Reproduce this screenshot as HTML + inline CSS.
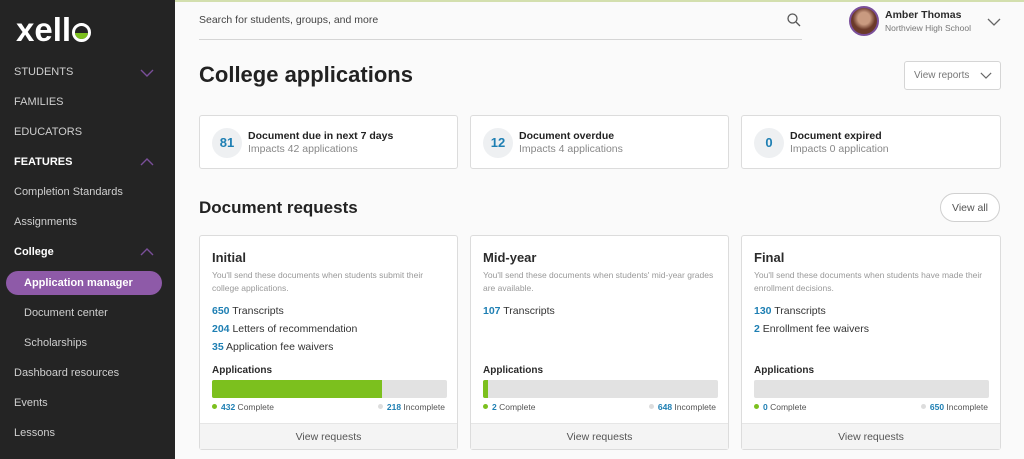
<!DOCTYPE html>
<html><head><style>
*{margin:0;padding:0;box-sizing:border-box}
body{width:1024px;height:459px;overflow:hidden;font-family:"Liberation Sans",sans-serif;background:#fafafa;position:relative;color:#2b2b2b}
.a{position:absolute}
#sb{left:0;top:0;width:175px;height:459px;background:#242424}
.nav{position:absolute;left:14px;font-size:11px;color:#cfcfcf}
.chev{position:absolute;left:140px;width:14px;height:8px}
.card{position:absolute;background:#fff;border:1px solid #dcdcdc;border-radius:3px}
.num{position:absolute;left:12px;top:12px;width:30px;height:30px;border-radius:50%;background:#eef0f2;color:#1e7fb3;font-weight:bold;font-size:13px;text-align:center;line-height:30px}
.st{position:absolute;left:48px;top:14px;font-size:10.5px;font-weight:bold;color:#222}
.ss{position:absolute;left:48px;top:27px;font-size:10.5px;color:#888}
.dt{position:absolute;left:12px;top:14px;font-size:13px;font-weight:bold}
.dd{position:absolute;left:12px;top:33px;width:240px;font-size:8.5px;line-height:13px;color:#999}
.li{position:absolute;left:12px;font-size:10.5px;color:#333}
.li b{color:#1e7fb3}
.ap{position:absolute;left:12px;top:129px;font-size:10px;font-weight:bold}
.bar{position:absolute;left:12px;top:144px;width:235px;height:18px;background:#e2e2e2;border-radius:2px;overflow:hidden}
.bar i{display:block;height:100%;background:#7cc01e}
.lg{position:absolute;top:166px;font-size:8.5px;color:#555}
.lg b{color:#1e7fb3}
.dot{display:inline-block;width:5px;height:5px;border-radius:50%;margin-right:4px;vertical-align:1px}
.ft{position:absolute;left:0;bottom:0;width:100%;height:26px;background:#f4f4f4;border-top:1px solid #e6e6e6;text-align:center;font-size:10.5px;line-height:26px;color:#555}
</style></head><body>
<div id="sb">
<div class="a" style="left:16px;top:11px;font-size:33px;font-weight:bold;color:#fff;letter-spacing:0px">xell<span style="display:inline-block;width:19px;height:19px;border:3.5px solid #fff;border-radius:50%;vertical-align:-1px;position:relative;overflow:hidden;margin-left:1px"><span style="position:absolute;left:0;right:0;bottom:0;height:6px;background:#7cc01e"></span></span></div>
<div class="nav" style="top:66px">STUDENTS</div>
<svg class="chev" style="top:69px" viewBox="0 0 14 8"><path d="M1 1l6 6 6-6" fill="none" stroke="#7a4f9a" stroke-width="1.4"/></svg>
<div class="nav" style="top:96px">FAMILIES</div>
<div class="nav" style="top:126px">EDUCATORS</div>
<div class="nav" style="top:156px;font-weight:bold;color:#fff">FEATURES</div>
<svg class="chev" style="top:158px" viewBox="0 0 14 8"><path d="M1 7l6-6 6 6" fill="none" stroke="#7a4f9a" stroke-width="1.4"/></svg>
<div class="nav" style="top:186px">Completion Standards</div>
<div class="nav" style="top:216px">Assignments</div>
<div class="nav" style="top:246px;font-weight:bold;color:#fff">College</div>
<svg class="chev" style="top:248px" viewBox="0 0 14 8"><path d="M1 7l6-6 6 6" fill="none" stroke="#7a4f9a" stroke-width="1.4"/></svg>
<div class="a" style="left:6px;top:271px;width:156px;height:24px;border-radius:12px;background:#8e5aa8"></div>
<div class="nav" style="left:24px;top:277px;font-weight:bold;color:#fff">Application manager</div>
<div class="nav" style="left:24px;top:307px">Document center</div>
<div class="nav" style="left:24px;top:337px">Scholarships</div>
<div class="nav" style="top:367px">Dashboard resources</div>
<div class="nav" style="top:397px">Events</div>
<div class="nav" style="top:427px">Lessons</div>
</div>
<div class="a" style="left:175px;top:0;width:849px;height:2px;background:#d3dfae"></div>
<div class="a" style="left:199px;top:14px;font-size:10.5px;color:#444">Search for students, groups, and more</div>
<svg class="a" style="left:787px;top:13px" width="14" height="14" viewBox="0 0 14 14"><circle cx="5.5" cy="5.5" r="4.5" fill="none" stroke="#555" stroke-width="1.3"/><path d="M9 9l4 4" stroke="#555" stroke-width="1.3"/></svg>
<div class="a" style="left:199px;top:39px;width:603px;height:1px;background:#d5d5d5"></div>
<div class="a" style="left:849px;top:6px;width:30px;height:30px;border-radius:50%;background:radial-gradient(circle at 50% 40%,#c99a80 0 30%,#6b3a2a 55%);border:2px solid #7a4f9a"></div>
<div class="a" style="left:885px;top:9px;font-size:10.5px;font-weight:bold">Amber Thomas</div>
<div class="a" style="left:885px;top:23px;font-size:8.5px;color:#777">Northview High School</div>
<svg class="a" style="left:987px;top:18px" width="14" height="8" viewBox="0 0 14 8"><path d="M1 1l6 6 6-6" fill="none" stroke="#666" stroke-width="1.3"/></svg>
<div class="a" style="left:199px;top:62px;font-size:22px;font-weight:bold;color:#222">College applications</div>
<div class="a" style="left:904px;top:61px;width:97px;height:29px;background:#fff;border:1px solid #d5d5d5;border-radius:3px;font-size:10px;color:#777;line-height:27px;padding-left:9px">View reports<svg style="position:absolute;left:75px;top:10px" width="12" height="7" viewBox="0 0 14 8"><path d="M1 1l6 6 6-6" fill="none" stroke="#666" stroke-width="1.3"/></svg></div>

<div class="card" style="left:199px;top:115px;width:259px;height:54px"><div class="num">81</div><div class="st">Document due in next 7 days</div><div class="ss">Impacts 42 applications</div></div>
<div class="card" style="left:470px;top:115px;width:259px;height:54px"><div class="num">12</div><div class="st">Document overdue</div><div class="ss">Impacts 4 applications</div></div>
<div class="card" style="left:741px;top:115px;width:260px;height:54px"><div class="num">0</div><div class="st">Document expired</div><div class="ss">Impacts 0 application</div></div>

<div class="a" style="left:199px;top:198px;font-size:17px;font-weight:bold;color:#222">Document requests</div>
<div class="a" style="left:940px;top:193px;width:60px;height:29px;border-radius:15px;background:#fff;border:1px solid #d0d0d0;font-size:10.5px;text-align:center;line-height:29px;color:#555">View all</div>

<div class="card" style="left:199px;top:235px;width:259px;height:215px">
<div class="dt">Initial</div><div class="dd">You'll send these documents when students submit their college applications.</div>
<div class="li" style="top:69px"><b>650</b> Transcripts</div>
<div class="li" style="top:87px"><b>204</b> Letters of recommendation</div>
<div class="li" style="top:105px"><b>35</b> Application fee waivers</div>
<div class="ap">Applications</div><div class="bar"><i style="width:72.5%"></i></div>
<div class="lg" style="left:12px"><span class="dot" style="background:#7cc01e"></span><b>432</b> Complete</div>
<div class="lg" style="right:12px"><span class="dot" style="background:#ddd"></span><b>218</b> Incomplete</div>
<div class="ft">View requests</div></div>

<div class="card" style="left:470px;top:235px;width:259px;height:215px">
<div class="dt">Mid-year</div><div class="dd">You'll send these documents when students' mid-year grades are available.</div>
<div class="li" style="top:69px"><b>107</b> Transcripts</div>
<div class="ap">Applications</div><div class="bar"><i style="width:2%"></i></div>
<div class="lg" style="left:12px"><span class="dot" style="background:#7cc01e"></span><b>2</b> Complete</div>
<div class="lg" style="right:12px"><span class="dot" style="background:#ddd"></span><b>648</b> Incomplete</div>
<div class="ft">View requests</div></div>

<div class="card" style="left:741px;top:235px;width:260px;height:215px">
<div class="dt">Final</div><div class="dd">You'll send these documents when students have made their enrollment decisions.</div>
<div class="li" style="top:69px"><b>130</b> Transcripts</div>
<div class="li" style="top:87px"><b>2</b> Enrollment fee waivers</div>
<div class="ap">Applications</div><div class="bar"><i style="width:0"></i></div>
<div class="lg" style="left:12px"><span class="dot" style="background:#7cc01e"></span><b>0</b> Complete</div>
<div class="lg" style="right:12px"><span class="dot" style="background:#ddd"></span><b>650</b> Incomplete</div>
<div class="ft">View requests</div></div>
</body></html>
